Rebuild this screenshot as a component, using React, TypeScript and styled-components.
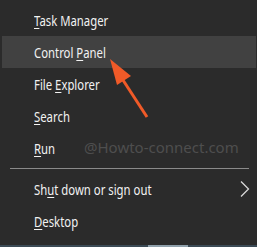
import styled, { createGlobalStyle } from 'styled-components';

const GlobalStyle = createGlobalStyle`
  html, body {
    margin: 0;
    padding: 0;
    background: #2b2b2b;
  }
`;

const Menu = styled.div`
  position: relative;
  width: 257px;
  height: 247px;
  box-sizing: border-box;
  padding-top: 4px;
  background: #2b2b2b;
  display: flex;
  flex-direction: column;
  font-family: 'Noto Sans', 'Open Sans', sans-serif;
  font-size: 14px;
  color: #f2f2f2;
  overflow: hidden;
`;

const Item = styled.div<{ $active?: boolean }>`
  height: 32px;
  margin: 0 1px 0 2px;
  padding: 0 6px 0 32px;
  display: flex;
  align-items: center;
  justify-content: space-between;
  background: ${(p) => (p.$active ? '#414141' : 'transparent')};
`;

// the source text is narrower than any installed face, so squeeze it a bit
const Label = styled.span`
  display: inline-block;
  white-space: nowrap;
  transform: scaleX(0.81);
  transform-origin: left center;
`;

const Key = styled.span`
  text-decoration: underline;
  text-underline-offset: 2px;
  text-decoration-thickness: 1px;
`;

const Separator = styled.div`
  height: 1px;
  margin: 4px 8px 4px 10px;
  background: #8a8a8a;
`;

const Spacer = styled.div`
  flex: 1;
`;

const BottomBar = styled.div`
  height: 2px;
  display: flex;
  background: #3b4a55;
`;

const BottomThumb = styled.div`
  width: 40px;
  margin-left: 148px;
  background: #8fa0ab;
`;

const Watermark = styled.div`
  position: absolute;
  left: 84px;
  top: 137px;
  font-size: 15px;
  color: #4e4e4e;
  pointer-events: none;
`;

const Overlay = styled.svg`
  position: absolute;
  left: 0;
  top: 0;
  pointer-events: none;
`;

const Chevron = () => (
  <svg width="10" height="16" viewBox="0 0 10 16">
    <polyline points="1,0.5 8.5,8 1,15.5" fill="none" stroke="#d8d8d8" strokeWidth="1.3" />
  </svg>
);

export default function App() {
  return (
    <>
      <GlobalStyle />
      <Menu>
        <Item>
          <Label><Key>T</Key>ask Manager</Label>
        </Item>
        <Item $active>
          <Label>Control <Key>P</Key>anel</Label>
        </Item>
        <Item>
          <Label>File <Key>E</Key>xplorer</Label>
        </Item>
        <Item>
          <Label><Key>S</Key>earch</Label>
        </Item>
        <Item>
          <Label><Key>R</Key>un</Label>
        </Item>
        <Separator />
        <Item>
          <Label>Sh<Key>u</Key>t down or sign out</Label>
          <Chevron />
        </Item>
        <Item>
          <Label><Key>D</Key>esktop</Label>
        </Item>
        <Spacer />
        <BottomBar>
          <BottomThumb />
        </BottomBar>
        <Watermark>@Howto-connect.com</Watermark>
        <Overlay width="257" height="247" viewBox="0 0 257 247">
          <line x1="147" y1="117" x2="121" y2="77" stroke="#f05a28" strokeWidth="3" />
          <polygon points="110,59 131,76 117,85" fill="#f05a28" />
        </Overlay>
      </Menu>
    </>
  );
}
